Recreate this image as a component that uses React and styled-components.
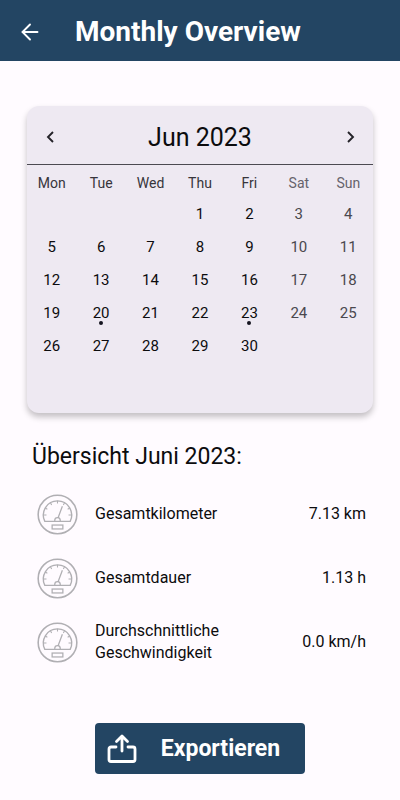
import React from "react";
import styled, { createGlobalStyle } from "styled-components";

const GlobalStyle = createGlobalStyle`
  body {
    margin: 0;
    background-color: #fffbff;
    color: #0c0c0e;
    font-family: Roboto, sans-serif;
    font-size: 15px;
  }
  * {
    box-sizing: border-box;
  }
  button {
    border: none;
    padding: 0;
    background: none;
    color: inherit;
    font-family: inherit;
    cursor: pointer;
  }
`;

const Header = styled.header`
  display: flex;
  align-items: center;
  gap: 27px;
  height: 61px;
  padding: 2px 12px 0;
  background-color: #234563;
  color: white;
  h1 {
    margin: 0;
    font-size: 28px;
    line-height: 36px;
    font-weight: bold;
  }
`;

const IconButton = styled.button`
  display: flex;
  align-items: center;
  justify-content: center;
  width: 36px;
  height: 36px;
`;

const Content = styled.main`
  display: flex;
  flex-direction: column;
  padding: 45px 27px 26px;
`;

const Calendar = styled.section`
  min-height: 307px;
  border-radius: 12px;
  background-color: #eee9f2;
  box-shadow: 0 4px 6px rgba(0, 0, 0, 0.24);
`;

const MonthBar = styled.div`
  display: flex;
  align-items: center;
  justify-content: space-between;
  height: 59px;
  padding: 4px 5px 0;
  border-bottom: 1px solid #4c4a52;
  h2 {
    margin: 0;
    font-size: 25px;
    font-weight: 400;
  }
`;

const MonthTable = styled.table`
  width: 100%;
  margin-top: 4px;
  border-collapse: collapse;
  table-layout: fixed;
  text-align: center;
`;

const Weekday = styled.th`
  height: 28px;
  padding: 0;
  font-size: 14px;
  font-weight: 400;
  color: ${({ $weekend }) => ($weekend ? "#66636b" : "#37353b")};
`;

const Day = styled.td`
  position: relative;
  height: 33px;
  padding: 0;
  font-size: 15px;
  color: ${({ $weekend }) => ($weekend ? "#4a484e" : "#0c0c0e")};
`;

const Dot = styled.span`
  position: absolute;
  left: 50%;
  bottom: 4px;
  width: 4px;
  height: 4px;
  margin-left: -2px;
  border-radius: 50%;
  background-color: #14141f;
`;

const Summary = styled.section`
  padding: 27px 7px 0 5px;
  h2 {
    margin: 0;
    font-size: 23px;
    line-height: 34px;
    font-weight: 400;
  }
`;

const StatList = styled.dl`
  margin: 8px 0 0;
`;

const Stat = styled.div`
  display: flex;
  align-items: center;
  gap: 17px;
  height: 64px;
  padding-left: 5px;
  font-size: 16px;
  line-height: 22px;
  dt {
    flex: 1;
  }
  dd {
    margin: 0;
  }
`;

const ExportButton = styled.button`
  display: flex;
  align-items: center;
  align-self: center;
  gap: 24px;
  height: 51px;
  margin-top: 49px;
  padding: 0 25px 0 12px;
  border-radius: 4px;
  background-color: #234563;
  color: white;
  font-size: 23px;
  font-weight: bold;
`;

const ArrowLeft = () => (
  <svg
    width="18"
    height="18"
    viewBox="0 0 18 18"
    fill="none"
    stroke="currentColor"
    strokeWidth="1.9"
    strokeLinecap="round"
  >
    <path d="M16.500 9H2M9 1.500L1.500 9l7.500 7.500" />
  </svg>
);

const Chevron = ({ d }) => (
  <svg width="12" height="12" viewBox="0 0 12 12" fill="none" stroke="#242329" strokeWidth="1.9">
    <path d={d} />
  </svg>
);

const Gauge = () => (
  <svg width="41" height="41" viewBox="0 0 42 42" fill="none" stroke="#b0afb3">
    <circle cx="21" cy="21" r="19.8" strokeWidth="1.6" />
    <path d="M8 28a14.500 14.500 0 1 1 26 0z" strokeWidth="1.4" strokeLinejoin="round" />
    <path
      d="M6.500 21.600h3.200M8.400 14.400l2.200 1.200M13.800 9l1.200 2.200M21 7v2.800M28.200 9l-1.200 2.200M33.600 14.400l-2.200 1.200M35.500 21.600h-3.200"
      strokeWidth="1.1"
    />
    <path d="M18.200 28v-1a2.800 2.800 0 0 1 5.600 0v1M21.700 24L26 12.500" strokeWidth="1.3" />
    <rect x="15.500" y="31.800" width="11" height="4" strokeWidth="1.3" />
  </svg>
);

const ShareIcon = () => (
  <svg
    width="30"
    height="30"
    viewBox="0 0 30 30"
    fill="none"
    stroke="currentColor"
    strokeWidth="2.800"
    strokeLinecap="round"
    strokeLinejoin="round"
  >
    <path d="M9 13H4a2 2 0 0 0-2 2v10.500a2 2 0 0 0 2 2h22a2 2 0 0 0 2-2V15a2 2 0 0 0-2-2h-5" />
    <path d="M15 17V2.500M9.500 7.500L15 2l5.500 5.500" />
  </svg>
);

const weekdays = ["Mon", "Tue", "Wed", "Thu", "Fri", "Sat", "Sun"];
const weeks = [
  [null, null, null, 1, 2, 3, 4],
  [5, 6, 7, 8, 9, 10, 11],
  [12, 13, 14, 15, 16, 17, 18],
  [19, 20, 21, 22, 23, 24, 25],
  [26, 27, 28, 29, 30, null, null],
];
const markedDays = [20, 23];

const stats = [
  { label: "Gesamtkilometer", value: "7.13 km" },
  { label: "Gesamtdauer", value: "1.13 h" },
  { label: "Durchschnittliche Geschwindigkeit", value: "0.0 km/h" },
];

const MonthlyOverview = () => {
  return (
    <>
      <GlobalStyle />
      <Header>
        <IconButton aria-label="Back">
          <ArrowLeft />
        </IconButton>
        <h1>Monthly Overview</h1>
      </Header>
      <Content>
        <Calendar>
          <MonthBar>
            <IconButton aria-label="Previous month">
              <Chevron d="M9 1L4 6l5 5" />
            </IconButton>
            <h2>Jun 2023</h2>
            <IconButton aria-label="Next month">
              <Chevron d="M4 1l5 5-5 5" />
            </IconButton>
          </MonthBar>
          <MonthTable>
            <thead>
              <tr>
                {weekdays.map((name, i) => (
                  <Weekday key={name} scope="col" $weekend={i > 4}>
                    {name}
                  </Weekday>
                ))}
              </tr>
            </thead>
            <tbody>
              {weeks.map((week, w) => (
                <tr key={w}>
                  {week.map((day, i) => (
                    <Day key={i} $weekend={i > 4}>
                      {day}
                      {markedDays.includes(day) && <Dot />}
                    </Day>
                  ))}
                </tr>
              ))}
            </tbody>
          </MonthTable>
        </Calendar>
        <Summary>
          <h2>Übersicht Juni 2023:</h2>
          <StatList>
            {stats.map(({ label, value }) => (
              <Stat key={label}>
                <Gauge />
                <dt>{label}</dt>
                <dd>{value}</dd>
              </Stat>
            ))}
          </StatList>
        </Summary>
        <ExportButton>
          <ShareIcon />
          Exportieren
        </ExportButton>
      </Content>
    </>
  );
};

export default MonthlyOverview;
